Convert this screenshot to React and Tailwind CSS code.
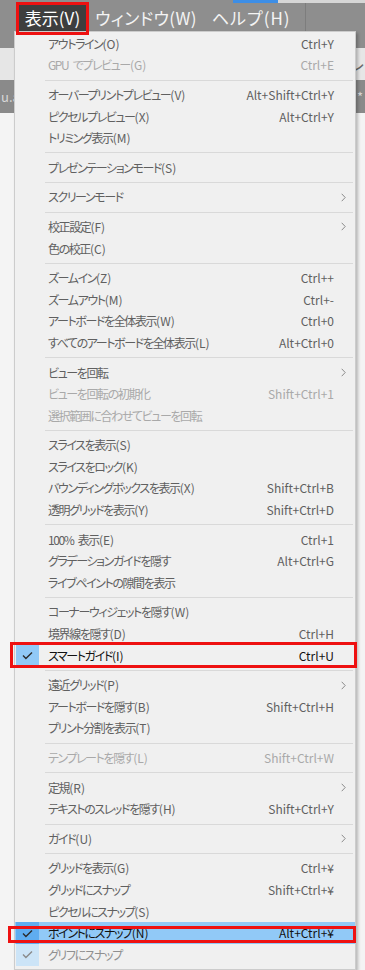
const SEP = 'sep';

const items = [
  { label: 'アウトライン(O)', sc: 'Ctrl+Y' },
  { label: 'GPU でプレビュー(G)', sc: 'Ctrl+E', disabled: true },
  SEP,
  { label: 'オーバープリントプレビュー(V)', sc: 'Alt+Shift+Ctrl+Y' },
  { label: 'ピクセルプレビュー(X)', sc: 'Alt+Ctrl+Y' },
  { label: 'トリミング表示(M)' },
  SEP,
  { label: 'プレゼンテーションモード(S)' },
  SEP,
  { label: 'スクリーンモード', sub: true },
  SEP,
  { label: '校正設定(F)', sub: true },
  { label: '色の校正(C)' },
  SEP,
  { label: 'ズームイン(Z)', sc: 'Ctrl++' },
  { label: 'ズームアウト(M)', sc: 'Ctrl+-' },
  { label: 'アートボードを全体表示(W)', sc: 'Ctrl+0' },
  { label: 'すべてのアートボードを全体表示(L)', sc: 'Alt+Ctrl+0' },
  SEP,
  { label: 'ビューを回転', sub: true },
  { label: 'ビューを回転の初期化', sc: 'Shift+Ctrl+1', disabled: true },
  { label: '選択範囲に合わせてビューを回転', disabled: true },
  SEP,
  { label: 'スライスを表示(S)' },
  { label: 'スライスをロック(K)' },
  { label: 'バウンディングボックスを表示(X)', sc: 'Shift+Ctrl+B' },
  { label: '透明グリッドを表示(Y)', sc: 'Shift+Ctrl+D' },
  SEP,
  { label: '100% 表示(E)', sc: 'Ctrl+1' },
  { label: 'グラデーションガイドを隠す', sc: 'Alt+Ctrl+G' },
  { label: 'ライブペイントの隙間を表示' },
  SEP,
  { label: 'コーナーウィジェットを隠す(W)' },
  { label: '境界線を隠す(D)', sc: 'Ctrl+H' },
  { label: 'スマートガイド(I)', sc: 'Ctrl+U', check: 'mid', dark: true },
  SEP,
  { label: '遠近グリッド(P)', sub: true },
  { label: 'アートボードを隠す(B)', sc: 'Shift+Ctrl+H' },
  { label: 'プリント分割を表示(T)' },
  SEP,
  { label: 'テンプレートを隠す(L)', sc: 'Shift+Ctrl+W', disabled: true },
  SEP,
  { label: '定規(R)', sub: true },
  { label: 'テキストのスレッドを隠す(H)', sc: 'Shift+Ctrl+Y' },
  SEP,
  { label: 'ガイド(U)', sub: true },
  SEP,
  { label: 'グリッドを表示(G)', sc: 'Ctrl+¥' },
  { label: 'グリッドにスナップ', sc: 'Shift+Ctrl+¥' },
  { label: 'ピクセルにスナップ(S)' },
  { label: 'ポイントにスナップ(N)', sc: 'Alt+Ctrl+¥', check: 'strong', dark: true, hot: true },
  { label: 'グリフにスナップ', check: 'light' },
];

const checkBg = {
  mid: 'bg-[#91c9f7]',
  strong: 'bg-[#5fadf0]',
  light: 'bg-[#cce4f7]',
};

function Check({ faint }) {
  return (
    <svg width="11" height="9" viewBox="0 0 11 9" fill="none">
      <path
        d="M1 4.6 L3.9 7.4 L10 1.4"
        stroke={faint ? '#8a8a8a' : '#2b2b2b'}
        strokeWidth="1.4"
      />
    </svg>
  );
}

// japanese part is set tighter than the "(X)" accelerator suffix
function Label({ text }) {
  const m = text.match(/^(.*?)(\([A-Z]\))?$/);
  return (
    <>
      <span className="tracking-[-1.4px] [word-spacing:3px]">{m[1]}</span>
      {m[2] && <span>{m[2]}</span>}
    </>
  );
}

function Row({ item }) {
  if (item === SEP) {
    return (
      <div className="flex h-[8px] items-center">
        <div className="ml-[30px] mr-[2px] h-px flex-1 bg-[#d9d9d9]" />
      </div>
    );
  }
  const color = item.disabled
    ? 'text-[#a9a9a9]'
    : item.dark
      ? 'text-[#111111]'
      : item.check === 'light'
        ? 'text-[#8f8f8f]'
        : 'text-[#606060]';
  return (
    <div className={`flex h-[21.6px] items-center ${item.hot ? 'bg-[#91c9f7]' : ''}`}>
      <div
        className={`ml-[1px] flex w-[23px] self-stretch items-center justify-center ${
          item.check ? checkBg[item.check] : ''
        }`}
      >
        {item.check && <Check faint={item.check === 'light'} />}
      </div>
      <div className={`flex-1 whitespace-nowrap pl-[9px] ${color}`}>
        <Label text={item.label} />
      </div>
      {item.sc && <div className={`whitespace-nowrap ${color}`}>{item.sc}</div>}
      <div className="flex w-[21px] justify-end pr-[9px]">
        {item.sub && (
          <svg width="5" height="9" viewBox="0 0 5 9" fill="none">
            <path d="M0.7 0.8 L4.2 4.5 L0.7 8.2" stroke="#8a8a8a" strokeWidth="1" />
          </svg>
        )}
      </div>
    </div>
  );
}

export default function App() {
  return (
    <div
      className="relative h-[970px] w-[365px] overflow-hidden bg-[#f4f4f4] [font-feature-settings:'palt']"
      style={{ fontFamily: '"Noto Sans CJK JP", "Noto Sans", sans-serif' }}
    >
      {/* app chrome behind the menu */}
      <div className="relative h-[48px] bg-[#8e8e8e]">
        <div className="flex h-[35px] items-center text-[17px] text-[#f4f4f4]">
          <div className="ml-[19px] flex h-[29px] w-[67px] items-center justify-center bg-[#3e3e3e] text-white">
            表示(V)
          </div>
          <div className="ml-[9px] tracking-[0.4px]">ウィンドウ(W)</div>
          <div className="ml-[15px] tracking-[1px]">ヘルプ(H)</div>
          <div className="ml-[14px] h-[30px] w-px bg-[#7d7d7d]" />
        </div>
        <div className="absolute left-[233px] top-0 h-[3px] w-[45px] bg-[#3d8ee6]" />
        <div className="absolute left-[278px] top-0 h-[3px] w-[87px] bg-[#d6d6d6]" />
      </div>
      <div className="flex h-[32px] items-center justify-end bg-[#e6e6e6] text-[18px] text-[#6a6a6a]">
        <span className="mr-[1px]">レ</span>
      </div>
      <div className="flex h-[33px] items-center justify-between bg-[#8a8a8a] pl-[1px] text-[13px] text-[#d8d8d8]">
        <span>u.a</span>
        <span className="mr-[2px]">*</span>
      </div>

      {/* dropdown menu */}
      <div className="absolute bottom-0 left-[14px] top-[31px] w-[342px] border border-[#cccccc] bg-[#f0f0f0] pt-[1px] text-[12px] shadow-[2px_2px_3px_rgba(0,0,0,0.25)]">
        {items.map((item, i) => (
          <Row key={i} item={item} />
        ))}
      </div>

      {/* red annotation boxes */}
      <div className="absolute left-[16px] top-[2px] h-[33px] w-[73px] border-[3px] border-[#ee1111]" />
      <div className="absolute left-[10px] top-[642px] h-[26px] w-[347px] border-[3px] border-[#ee1111]" />
      <div className="absolute left-[8px] top-[926px] h-[17px] w-[348px] border-[3px] border-[#ee1111]" />
    </div>
  );
}
